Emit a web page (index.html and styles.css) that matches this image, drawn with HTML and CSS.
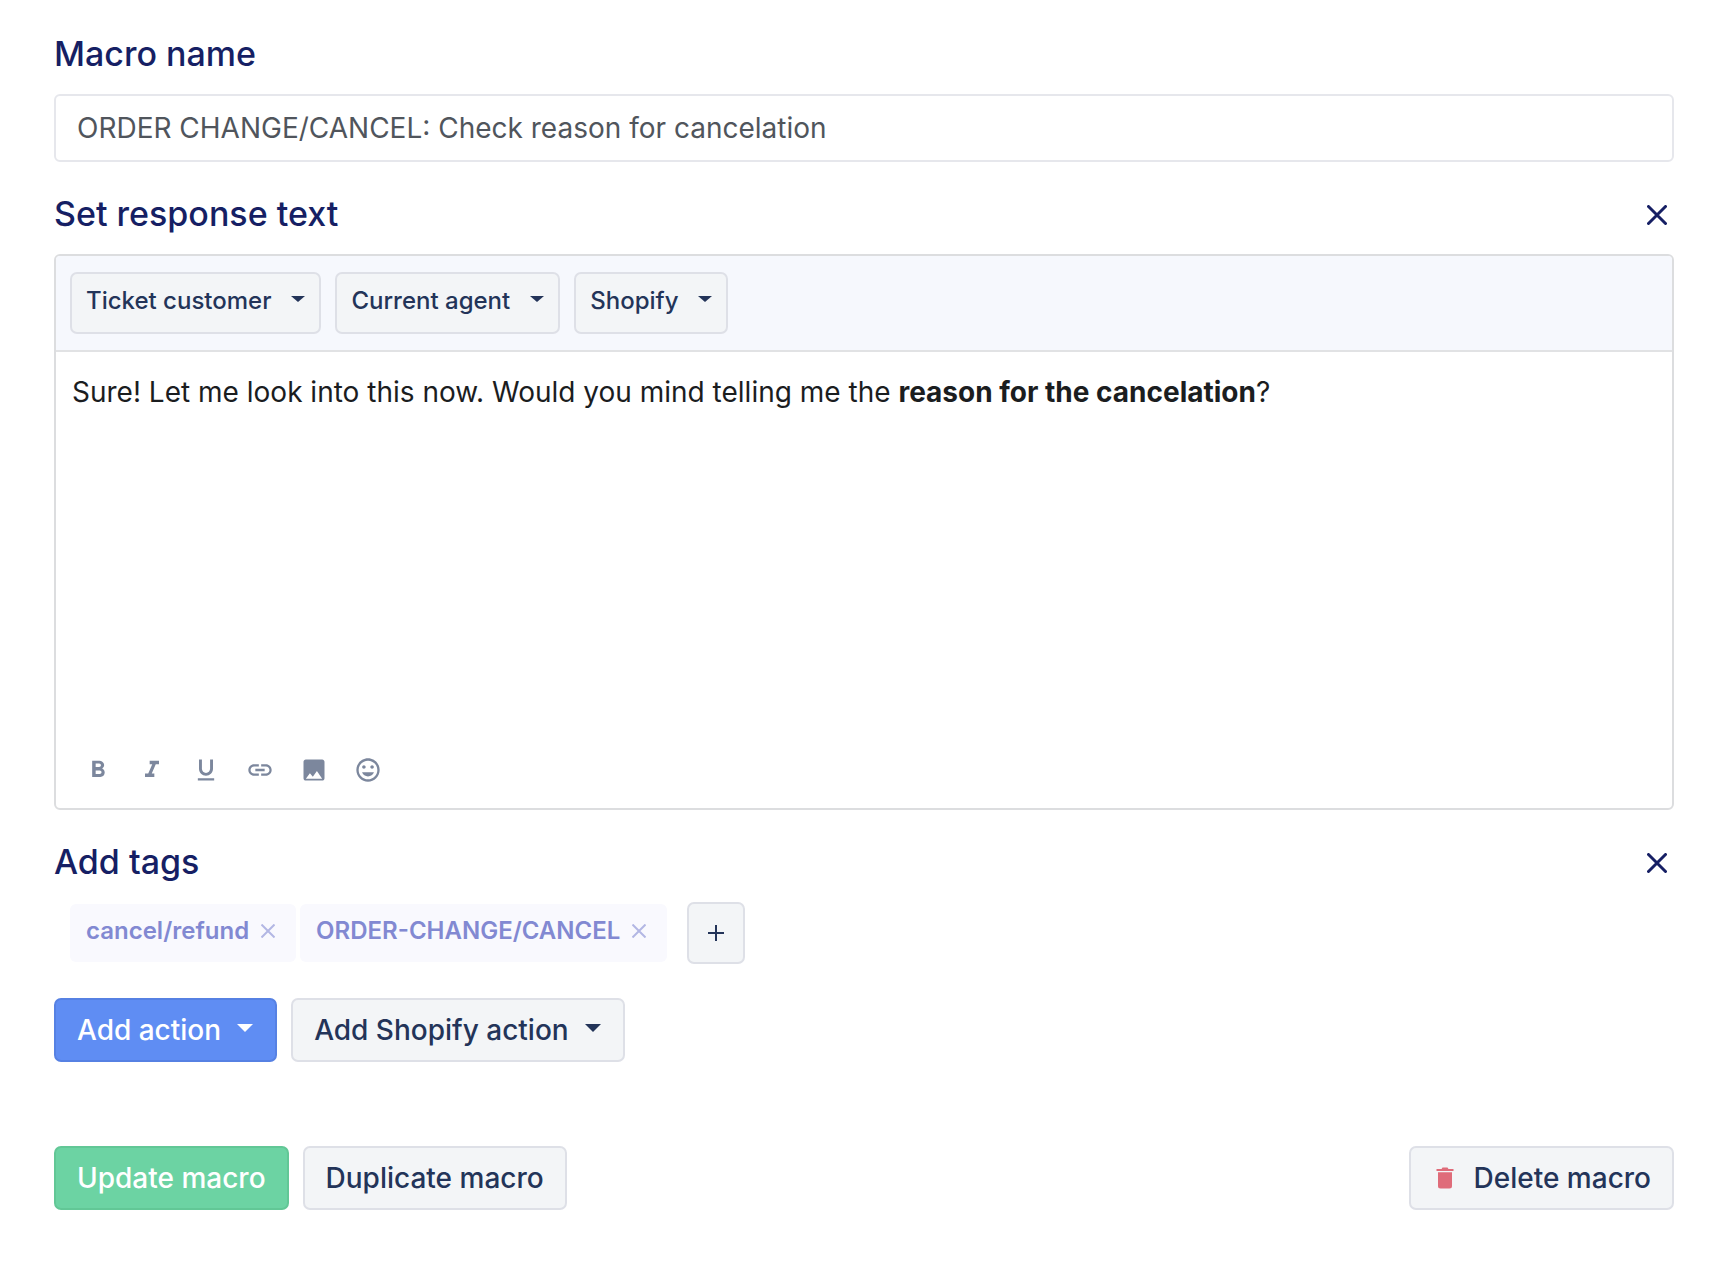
FILE: index.html
```html
<!DOCTYPE html>
<html lang="en">
<head>
    <meta charset="UTF-8">
    <meta name="viewport" content="width=device-width, initial-scale=1.0">
    <title>Edit macro</title>
    <link rel="stylesheet" href="styles.css">
</head>
<body>
    <form class="macro-form">
        <section class="section">
            <div class="section-header">
                <label class="section-title" for="macro-name">Macro name</label>
            </div>
            <input class="text-input" id="macro-name" type="text" value="ORDER CHANGE/CANCEL: Check reason for cancelation">
        </section>

        <section class="section">
            <div class="section-header">
                <h2 class="section-title" id="response-title">Set response text</h2>
                <button class="btn-close" type="button" aria-label="Remove response text">
                    <svg width="20" height="20" viewBox="0 0 20 20"><path d="M1.5 1.5l17 17M18.5 1.5l-17 17"/></svg>
                </button>
            </div>
            <div class="editor">
                <div class="editor-variables">
                    <button class="btn btn-small" type="button" aria-haspopup="menu">Ticket customer<span class="caret"></span></button>
                    <button class="btn btn-small" type="button" aria-haspopup="menu">Current agent<span class="caret"></span></button>
                    <button class="btn btn-small" type="button" aria-haspopup="menu">Shopify<span class="caret"></span></button>
                </div>
                <div class="editor-content" contenteditable="true" spellcheck="false" role="textbox" aria-multiline="true" aria-labelledby="response-title">Sure! Let me look into this now. Would you mind telling me the <strong>reason for the cancelation</strong>?</div>
                <div class="editor-tools">
                    <button class="tool" type="button" aria-label="Bold">
                        <svg viewBox="0 0 24 24"><path d="M15.6 10.79c.97-.67 1.65-1.77 1.65-2.79 0-2.26-1.75-4-4-4H7v14h7.04c2.09 0 3.71-1.7 3.71-3.79 0-1.52-.86-2.82-2.15-3.42zM10 6.5h3c.83 0 1.5.67 1.5 1.5s-.67 1.5-1.5 1.5h-3v-3zm3.5 9H10v-3h3.5c.83 0 1.5.67 1.5 1.5s-.67 1.5-1.5 1.5z"/></svg>
                    </button>
                    <button class="tool" type="button" aria-label="Italic">
                        <svg viewBox="0 0 24 24"><path d="M10 4v3h2.21l-3.42 8H6v3h8v-3h-2.21l3.42-8H18V4z"/></svg>
                    </button>
                    <button class="tool" type="button" aria-label="Underline">
                        <svg viewBox="0 0 24 24"><path d="M12 17c3.31 0 6-2.69 6-6V3h-2.5v8c0 1.93-1.57 3.5-3.5 3.5S8.5 12.93 8.5 11V3H6v8c0 3.31 2.69 6 6 6zm-7 2v2h14v-2H5z"/></svg>
                    </button>
                    <button class="tool" type="button" aria-label="Insert link">
                        <svg viewBox="0 0 24 24"><path d="M3.9 12c0-1.71 1.39-3.1 3.1-3.1h4V7H7c-2.76 0-5 2.24-5 5s2.24 5 5 5h4v-1.9H7c-1.71 0-3.1-1.39-3.1-3.1zM8 13h8v-2H8v2zm9-6h-4v1.9h4c1.71 0 3.1 1.39 3.1 3.1s-1.39 3.1-3.1 3.1h-4V17h4c2.76 0 5-2.24 5-5s-2.24-5-5-5z"/></svg>
                    </button>
                    <button class="tool" type="button" aria-label="Insert image">
                        <svg viewBox="0 0 24 24"><path d="M21 19V5c0-1.1-.9-2-2-2H5c-1.1 0-2 .9-2 2v14c0 1.1.9 2 2 2h14c1.1 0 2-.9 2-2zM5 19.5l3.5-4.8 2.5 3 3.5-4.8 4.5 6.6H5z"/></svg>
                    </button>
                    <button class="tool" type="button" aria-label="Insert emoji">
                        <svg viewBox="0 0 24 24"><path d="M11.99 2C6.47 2 2 6.48 2 12s4.47 10 9.99 10C17.52 22 22 17.52 22 12S17.52 2 11.99 2zM12 20c-4.42 0-8-3.58-8-8s3.58-8 8-8 8 3.58 8 8-3.58 8-8 8zm3.5-9c.83 0 1.5-.67 1.5-1.5S16.33 8 15.5 8 14 8.67 14 9.5s.67 1.5 1.5 1.5zm-7 0c.83 0 1.5-.67 1.5-1.5S9.33 8 8.5 8 7 8.67 7 9.5 7.67 11 8.5 11zm3.5 6.5c2.33 0 4.31-1.46 5.11-3.5H6.89c.8 2.04 2.78 3.5 5.11 3.5z"/></svg>
                    </button>
                </div>
            </div>
        </section>

        <section class="section">
            <div class="section-header">
                <h2 class="section-title">Add tags</h2>
                <button class="btn-close" type="button" aria-label="Remove tags">
                    <svg width="20" height="20" viewBox="0 0 20 20"><path d="M1.5 1.5l17 17M18.5 1.5l-17 17"/></svg>
                </button>
            </div>
            <div class="tags">
                <span class="tag">cancel/refund
                    <button class="tag-remove" type="button" aria-label="Remove cancel/refund">
                        <svg width="14" height="14" viewBox="0 0 14 14"><path d="M.5.5l13 13M13.5.5l-13 13"/></svg>
                    </button>
                </span>
                <span class="tag">ORDER-CHANGE/CANCEL
                    <button class="tag-remove" type="button" aria-label="Remove ORDER-CHANGE/CANCEL">
                        <svg width="14" height="14" viewBox="0 0 14 14"><path d="M.5.5l13 13M13.5.5l-13 13"/></svg>
                    </button>
                </span>
                <button class="btn btn-add" type="button" aria-label="Add tag">
                    <svg width="18" height="18" viewBox="0 0 18 18"><path d="M9 1v16M1 9h16"/></svg>
                </button>
            </div>
        </section>

        <div class="actions">
            <button class="btn btn-primary" type="button" aria-haspopup="menu">Add action<span class="caret"></span></button>
            <button class="btn" type="button" aria-haspopup="menu">Add Shopify action<span class="caret"></span></button>
        </div>

        <div class="footer">
            <button class="btn btn-success" type="submit">Update macro</button>
            <button class="btn" type="button">Duplicate macro</button>
            <button class="btn btn-delete" type="button">
                <svg width="18" height="22" viewBox="0 0 18 22"><path d="M.5 2h5l1-1.500h5l1 1.500h5v2H.5zM2 5.300h14V19c0 1.700-.8 2.500-2.500 2.500h-9C2.800 21.500 2 20.700 2 19z"/></svg>
                Delete macro
            </button>
        </div>
    </form>
</body>
</html>
```
FILE: styles.css
```css
* {
    margin: 0;
    padding: 0;
    box-sizing: border-box;
}

body {
    font-family: Inter, 'Liberation Sans', sans-serif;
    font-size: 28px;
    line-height: 40px;
    color: #1b1d1f;
    background: #ffffff;
}

button,
input {
    font: inherit;
}

button {
    cursor: pointer;
}

.macro-form {
    padding: 33px 54px;
}

.section {
    margin-bottom: 31px;
}

.section-header {
    display: flex;
    align-items: center;
    justify-content: space-between;
    margin-bottom: 19px;
}

.section-title {
    font-size: 34px;
    font-weight: 500;
    line-height: 42px;
    color: #161f64;
}

.btn-close {
    display: flex;
    padding: 8px 7px 6px;
    border: none;
    background: none;
}

.btn-close svg {
    fill: none;
    stroke: #161f64;
    stroke-width: 3;
    stroke-linecap: round;
}

.text-input {
    display: block;
    width: 100%;
    height: 68px;
    padding: 0 21px;
    border: 2px solid #e6e7ec;
    border-radius: 6px;
    color: #50555c;
    background: #ffffff;
}

.editor {
    border: 2px solid #dcdddf;
    border-radius: 6px;
}

.editor-variables {
    display: flex;
    gap: 14px;
    padding: 16px 14px;
    border-bottom: 2px solid #e1e2e4;
    border-radius: 4px 4px 0 0;
    background: #f6f8fd;
}

.editor-content {
    min-height: 382px;
    padding: 20px 16px;
    outline: none;
}

.editor-tools {
    display: flex;
    gap: 26px;
    padding: 22px 28px 24px;
}

.tool {
    width: 28px;
    height: 28px;
    border: none;
    background: none;
}

.tool svg {
    display: block;
    width: 28px;
    height: 28px;
    fill: #7c879d;
}

.btn {
    display: flex;
    align-items: center;
    height: 64px;
    padding: 0 21px;
    border: 2px solid #dee0e7;
    border-radius: 7px;
    font-weight: 500;
    color: #233459;
    background: #f3f5f7;
}

.btn-small {
    height: 62px;
    padding: 0 14px 4px;
    font-size: 24px;
}

.caret {
    margin: 0 1px 4px 16px;
    border-top: 8px solid;
    border-left: 8px solid transparent;
    border-right: 8px solid transparent;
}

.btn-small .caret {
    margin: 0 0 4px 20px;
    border-width: 6px 7px 0;
}

.btn-primary {
    color: #ffffff;
    border-color: #5681e3;
    background: #5f8df3;
}

.btn-success {
    color: #ffffff;
    border-color: #62c796;
    background: #6cd3a3;
}

.tags {
    display: flex;
    align-items: center;
    gap: 4px;
    padding-left: 16px;
}

.tag {
    display: flex;
    align-items: center;
    gap: 12px;
    height: 58px;
    padding: 0 21px 4px 16px;
    border-radius: 6px;
    font-size: 24px;
    font-weight: 600;
    color: #8289d2;
    background: #f9f9fe;
}

.tag-remove {
    display: flex;
    border: none;
    background: none;
}

.tag-remove svg {
    fill: none;
    stroke: #b3b7e4;
    stroke-width: 2;
}

.btn-add {
    justify-content: center;
    width: 58px;
    height: 62px;
    margin-left: 16px;
    padding: 0;
}

.btn-add svg {
    fill: none;
    stroke: #233459;
    stroke-width: 2;
}

.actions,
.footer {
    display: flex;
    gap: 14px;
}

.actions {
    margin: 34px 0 84px;
}

.btn-delete {
    gap: 20px;
    margin-left: auto;
}

.btn-delete svg {
    margin-left: 4px;
    fill: #df6c7a;
}
```
